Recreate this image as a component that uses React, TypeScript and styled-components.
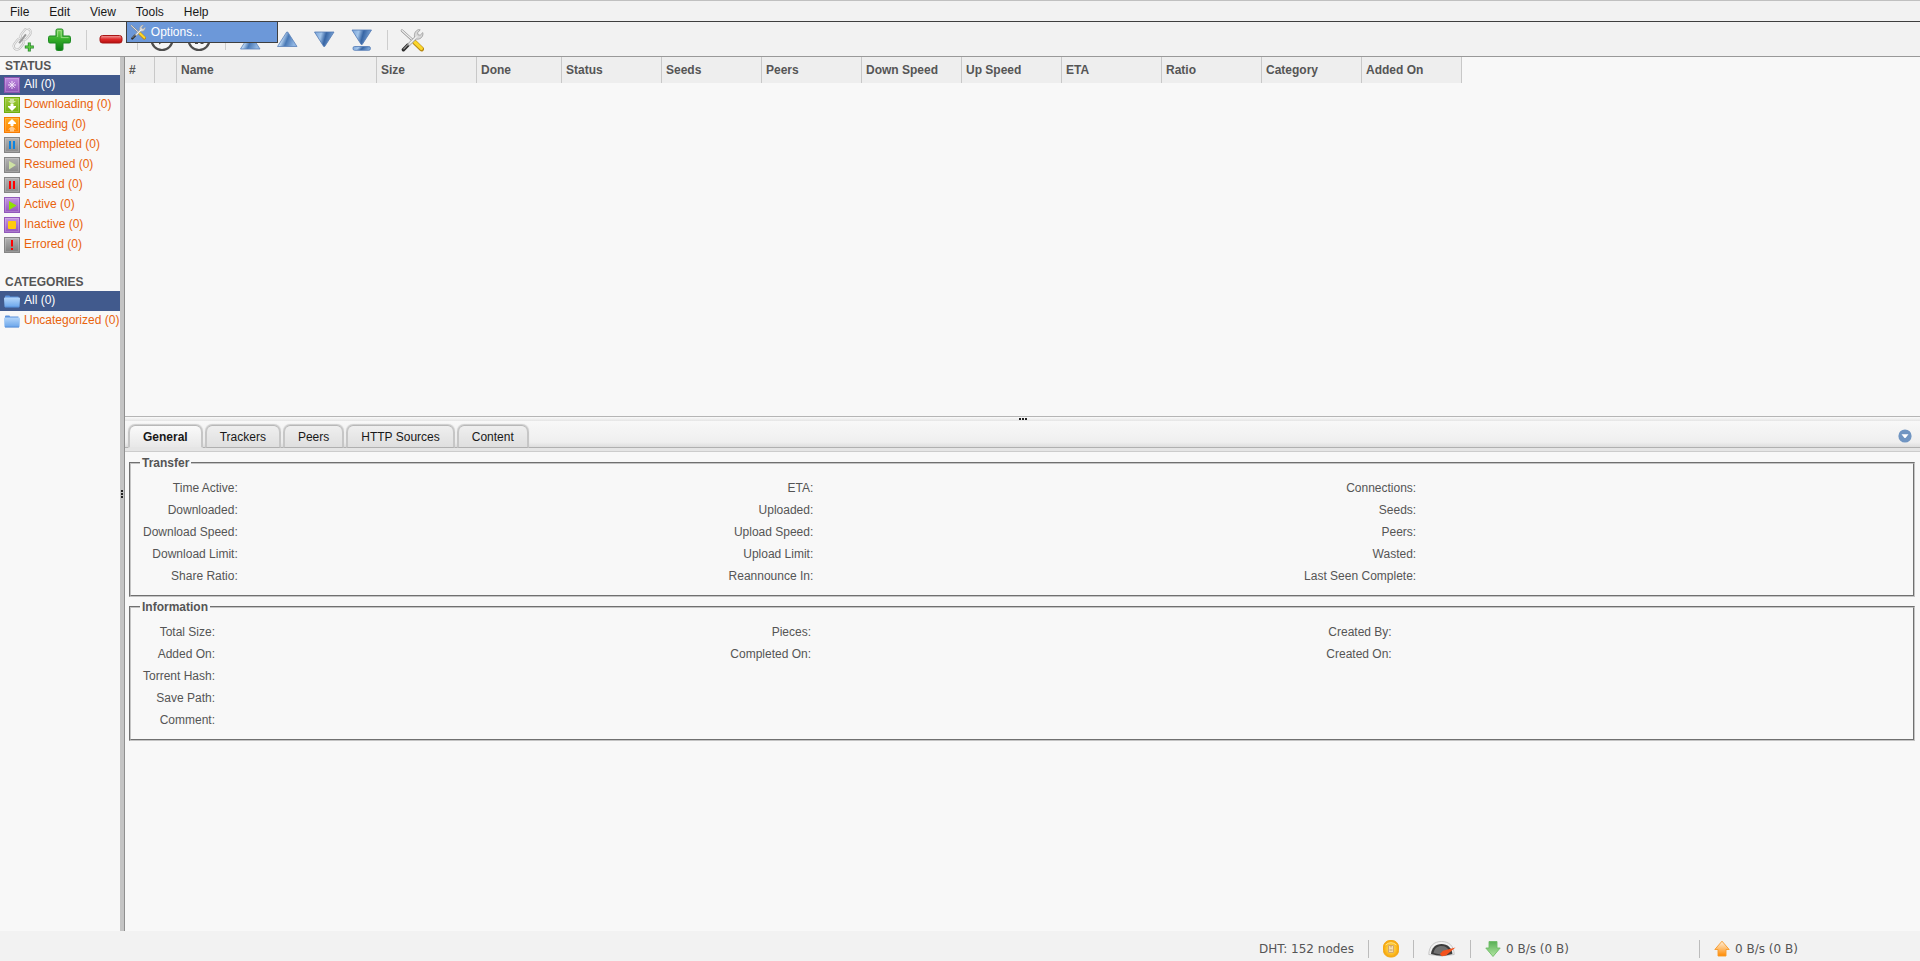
import React from "react";
import styled, { createGlobalStyle, css } from "styled-components";

const GlobalStyle = createGlobalStyle`
  *, *::before, *::after { box-sizing: border-box; }
  body {
    margin: 0;
    background: #f8f8f8;
    color: #555;
    font: 12px/16px "Liberation Sans", Arial, sans-serif;
  }
  button { font: inherit; color: inherit; border: 0; background: none; padding: 0; cursor: pointer; }
  ul { list-style: none; margin: 0; padding: 0; }
  svg { display: block; flex: none; }
`;

const Desktop = styled.div`
  display: flex;
  flex-direction: column;
  height: 100vh;
`;

/* Menu bar */

const MenuBar = styled.nav`
  background: #f2f2f2;
  border-top: 1px solid #c0c0c0;
  border-bottom: 1px solid #3f3f3f;
`;

const MenuList = styled.ul`
  display: flex;
`;

const MenuItem = styled.li`
  position: relative;
`;

const MenuButton = styled.button`
  display: block;
  height: 20px;
  padding: 2px 10px 0;
  line-height: 18px;
  color: #181818;
`;

const DropDown = styled.ul`
  position: absolute;
  top: 20px;
  left: 0;
  z-index: 2;
  width: 152px;
  border: 1px solid #3f3f3f;
  background: #6c98d9;
`;

const DropDownButton = styled.button`
  display: flex;
  align-items: center;
  gap: 5px;
  width: 100%;
  height: 20px;
  padding: 0 3px;
  color: #fff;
`;

/* Toolbar */

const Toolbar = styled.div`
  display: flex;
  align-items: center;
  height: 35px;
  padding: 2px 11px 0;
  background: #f2f2f2;
  border-bottom: 1px solid #999;
`;

const ToolButton = styled.button`
  width: 24px;
  height: 24px;
  & + & { margin-left: 13px; }
`;

const ToolDivider = styled.span`
  width: 1px;
  height: 20px;
  margin: 0 12px 0 14px;
  background: #cdcdcd;
`;

/* Body */

const Body = styled.div`
  display: flex;
  flex: 1;
  min-height: 0;
`;

const Sidebar = styled.aside`
  width: 120px;
  overflow: hidden;
`;

const FilterHeading = styled.h2`
  margin: 0;
  padding: 1px 5px;
  font-size: 12px;
  line-height: 16px;
  text-transform: uppercase;
  white-space: nowrap;
`;

const FilterList = styled.ul`
  margin-bottom: 18px;
`;

const FilterLink = styled.a<{ $selected?: boolean }>`
  display: flex;
  gap: 4px;
  height: 20px;
  padding: 2px 0 2px 4px;
  text-decoration: none;
  white-space: nowrap;
  color: #e8630c;
  ${(p) => p.$selected && css`
    color: #fff;
    background: #415a8d;
  `}
`;

const FilterText = styled.span`
  line-height: 14px;
`;

const ColumnHandle = styled.div`
  display: flex;
  flex-direction: column;
  align-items: center;
  justify-content: center;
  gap: 1px;
  width: 5px;
  background: #c4c4c4;
  border-right: 1px solid #8f8f8f;
`;

const Dot = styled.i`
  width: 2px;
  height: 2px;
  background: #222;
`;

const Main = styled.main`
  display: grid;
  grid-template-rows: 359fr auto 510fr;
  grid-template-columns: minmax(0, 1fr);
  flex: 1;
  min-width: 0;
`;

const TorrentPane = styled.section`
  overflow: hidden;
`;

const TorrentTable = styled.table`
  table-layout: fixed;
  width: 1337px;
  border-collapse: separate;
  border-spacing: 0;
  background: #eee;
`;

const HeaderCell = styled.th<{ $width: number }>`
  width: ${(p) => p.$width}px;
  height: 26px;
  padding: 0 4px;
  border-right: 1px solid #c8c8c8;
  text-align: left;
  white-space: nowrap;
`;

const RowHandle = styled.div`
  display: flex;
  align-items: center;
  justify-content: center;
  gap: 1px;
  height: 5px;
  border-top: 1px solid #b5b5b5;
  background: linear-gradient(#fafafa, #e5e5e5);
`;

/* Properties panel */

const PropertiesPane = styled.section`
  min-height: 0;
  overflow: hidden;
`;

const TabBar = styled.div`
  display: flex;
  align-items: flex-end;
  justify-content: space-between;
  height: 31px;
  padding: 0 8px 0 3px;
  background: linear-gradient(#f8f8f8, #efefef 21px, #dedede 26px, #b0b0b0 26px, #b0b0b0 27px, #e5e5e5 27px);
  border-bottom: 1px solid #ccc;
`;

const TabList = styled.div`
  display: flex;
  gap: 2px;
  margin-bottom: 3px;
`;

const Tab = styled.button<{ $active?: boolean }>`
  height: 23px;
  padding: 1px 13px 0;
  border-style: solid;
  border-width: 1px 2px;
  border-color: #b8b8b8 #c6c6c6 #b0b0b0;
  border-radius: 7px 7px 0 0;
  color: #181818;
  background: linear-gradient(#efefef, #dfdfdf);
  box-shadow: 0 -1px 1px #ccc;
  ${(p) => p.$active && css`
    font-weight: bold;
    background: linear-gradient(#fafafa, #e8e8e8);
    border-bottom-color: #e5e5e5;
  `}
`;

const CollapseButton = styled.button`
  margin-bottom: 8px;
`;

const PropertyGroup = styled.fieldset`
  min-width: 0;
  margin: 0 5px 3px 4px;
  padding: 7px 9px 8px;
  border: 2px groove #c4c4c4;
`;

const GroupTitle = styled.legend`
  padding: 0 2px;
  font-weight: bold;
  line-height: 14px;
`;

const Properties = styled.div`
  padding-top: 4px;
`;

const PropertyTable = styled.table`
  width: 100%;
  border-collapse: collapse;
`;

const Label = styled.th`
  height: 22px;
  padding: 0 0 0 3px;
  font-weight: normal;
  text-align: right;
  white-space: nowrap;
`;

const Value = styled.td`
  width: 33%;
  padding: 0;
`;

/* Status bar */

const StatusBar = styled.footer`
  display: flex;
  align-items: center;
  justify-content: flex-end;
  height: 30px;
  padding-top: 6px;
  background: #f2f2f2;
  font-family: Verdana, "DejaVu Sans", sans-serif;
`;

const StatusCell = styled.div<{ $wide?: boolean }>`
  display: flex;
  align-items: center;
  gap: 5px;
  height: 18px;
  padding: 0 14px;
  white-space: nowrap;
  ${(p) => p.$wide && css`width: 229px;`}
  & + & { border-left: 1px solid #bcbcbc; }
  &:last-child { width: 221px; }
`;

/* Drawings */

const ToolsIcon = ({ size }: { size: number }) => (
  <svg width={size} height={size} viewBox="0 0 24 24" aria-hidden="true">
    <path d="M2 2.600 13.400 13" stroke="#8c8c8c" strokeWidth="2.600" strokeLinecap="round" />
    <path d="M2 2.400 13 12.600" stroke="#eee" strokeWidth="1.300" strokeLinecap="round" />
    <path d="M14.600 14.200 21.600 21" stroke="#b98a14" strokeWidth="4.800" strokeLinecap="round" />
    <path d="M14.700 14 21.400 20.400" stroke="#fbd62c" strokeWidth="3.200" strokeLinecap="round" />
    <path d="M3.400 21.800 8 17" stroke="#2b2b2b" strokeWidth="3.400" strokeLinecap="round" />
    <path d="M3.800 20.800 7.600 16.800" stroke="#999" strokeWidth="1.200" strokeLinecap="round" />
    <path d="M7.600 16 14.600 9c-.8-3 .6-6.400 4-7.400l1.600.2-2.600 3 .4 2 2.200.4 2.600-2.600c.8 3.200-1.600 6.600-5.400 6.600l-1.200-.2-6.800 7z" fill="#d8d8d8" stroke="#999" strokeWidth=".8" />
    <path d="M10 15.400 17 8.400" stroke="#fff" strokeWidth="1" />
  </svg>
);

const LinkAddIcon = () => (
  <svg width="24" height="24" viewBox="0 0 24 24" fill="none" aria-hidden="true">
    <g transform="rotate(-52 11 11)">
      <rect x="-1" y="8" width="12" height="7" rx="3.500" stroke="#b5b5b5" strokeWidth="2.200" />
      <rect x="-1" y="8" width="12" height="7" rx="3.500" stroke="#ececec" strokeWidth="1.100" />
      <rect x="11" y="7.500" width="12" height="7" rx="3.500" stroke="#b5b5b5" strokeWidth="2.200" />
      <rect x="11" y="7.500" width="12" height="7" rx="3.500" stroke="#ececec" strokeWidth="1.100" />
      <path d="M6 11.300h11" stroke="#9a9a9a" strokeWidth="2" />
    </g>
    <path d="M18.300 14.500v9M13.800 19h9" stroke="#27862a" strokeWidth="3" />
    <path d="M18.300 15.300v7.400M14.600 19H22" stroke="#5ccb43" strokeWidth="1.400" />
  </svg>
);

const AddIcon = () => (
  <svg width="24" height="24" viewBox="0 0 24 24" aria-hidden="true">
    <defs>
      <linearGradient id="add" x2="0" y2="1"><stop stopColor="#7bd05b" /><stop offset=".45" stopColor="#38b12b" /><stop offset="1" stopColor="#0d7c16" /></linearGradient>
    </defs>
    <path d="M9.500 1h4q1.500 0 1.500 1.500V8h6q1.500 0 1.500 1.500v4q0 1.500-1.500 1.500h-6v6q0 1.500-1.500 1.500h-4Q8 22.500 8 21v-6H2Q.5 15 .5 13.500v-4Q.5 8 2 8h6V2.500Q8 1 9.500 1z" fill="url(#add)" stroke="#1d8a22" />
    <path d="M9.600 9V2.600h3.600V9.600h7.400" stroke="#b4ea9c" fill="none" opacity=".7" />
  </svg>
);

const RemoveIcon = () => (
  <svg width="24" height="24" viewBox="0 0 24 24" aria-hidden="true">
    <defs>
      <linearGradient id="remove" x2="0" y2="1"><stop stopColor="#f0a0a0" /><stop offset=".5" stopColor="#e02a2a" /><stop offset="1" stopColor="#b50d0d" /></linearGradient>
    </defs>
    <rect x="1" y="7.500" width="22" height="7.500" rx="2.500" fill="url(#remove)" stroke="#a81616" />
  </svg>
);

const CircleIcon = ({ kind }: { kind: "play" | "pause" }) => (
  <svg width="24" height="24" viewBox="0 0 24 24" aria-hidden="true">
    <circle cx="12" cy="11.500" r="10.500" fill="#f6f6f6" stroke="#4e4e4e" strokeWidth="2.200" />
    {kind === "play" ? <path d="M9 6v10.500l8-5.200z" fill="#4e4e4e" /> : <path d="M8 6.500h3v9.500H8zM13.500 6.500h3v9.500h-3z" fill="#4e4e4e" />}
  </svg>
);

const QueueIcon = ({ down, bar }: { down?: boolean; bar?: boolean }) => (
  <svg width="24" height="24" viewBox="0 0 24 24" aria-hidden="true">
    <defs>
      <linearGradient id="queue" x2="1" y2=".3"><stop stopColor="#a5c8ee" /><stop offset=".35" stopColor="#b9d5f2" /><stop offset=".6" stopColor="#4878b5" /><stop offset="1" stopColor="#8fb5e2" /></linearGradient>
      <linearGradient id="queue-down" x2="1" y2=".2"><stop stopColor="#78a3d8" /><stop offset=".35" stopColor="#a3c5ea" /><stop offset=".6" stopColor="#3765a4" /><stop offset="1" stopColor="#7ea8da" /></linearGradient>
    </defs>
    {down
      ? <path d={bar ? "M3 2h19.500L13.200 16.500h-1z" : "M2.500 4h19.500L12.700 18.500h-1z"} fill="url(#queue-down)" stroke="#5079b4" strokeWidth=".8" strokeLinejoin="round" />
      : <path d={bar ? "M2.500 21h19.500L12.700 6.500h-1z" : "M2.500 18.500h19.500L12.700 4h-1z"} fill="url(#queue)" stroke="#5b82ba" strokeWidth=".8" strokeLinejoin="round" />}
    {bar && <rect x="4" y={down ? 18.500 : 1} width="17.400" height="3.800" rx="1.600" fill="url(#queue-down)" stroke="#5079b4" strokeWidth=".8" />}
  </svg>
);

type FilterKind = "all" | "downloading" | "seeding" | "completed" | "resumed" | "paused" | "active" | "inactive" | "errored";

const tileColors: Record<FilterKind, [string, string, string]> = {
  all: ["#c08ae0", "#8b4fb4", "#8a52b0"],
  downloading: ["#a2cc3c", "#74b010", "#6fae0c"],
  seeding: ["#ffab1e", "#ff8200", "#f77c00"],
  completed: ["#b4b4b4", "#8a8a8a", "#858585"],
  resumed: ["#b4b4b4", "#8a8a8a", "#858585"],
  paused: ["#b4b4b4", "#8a8a8a", "#858585"],
  active: ["#c597e2", "#9354bd", "#9158ba"],
  inactive: ["#c597e2", "#9354bd", "#9158ba"],
  errored: ["#b4b4b4", "#7d7d7d", "#858585"],
};

const tileMarks: Record<FilterKind, React.ReactNode> = {
  all: <path d="M8 4v8M4 8h8M5.300 5.300l5.400 5.400M10.700 5.300l-5.400 5.400" stroke="#efe0f8" strokeWidth="1" />,
  downloading: <><path d="M6 2h4v2h2L8 7.500 4 4h2z" fill="#cfe6a0" /><path d="M6.500 7h3v2H12v1l-4 4-4-4V9h2.500z" fill="#fff" /></>,
  seeding: <><path d="M6 14.500h4v-2h2L8 9l-4 3.500h2z" fill="#ffc98c" /><path d="M6.500 9h3V7H12V6L8 2 4 6v1h2.500z" fill="#fff" /></>,
  completed: <path d="M5 4h2v8H5zM9 4h2v8H9z" fill="#0b84e0" />,
  resumed: <path d="M5 4v8.500L12 8z" fill="#cfe3a4" />,
  paused: <path d="M5 4h2v8H5zM9 4h2v8H9z" fill="#f00" />,
  active: <path d="M5 4v9l7.500-4.500z" fill="#8fe000" />,
  inactive: <rect x="4" y="4" width="8" height="8" rx="1" fill="#ffcb0c" />,
  errored: <path d="M7 3h2v6.500H7zM7 11h2v2H7z" fill="#f00" />,
};

const FilterIcon = ({ kind }: { kind: FilterKind }) => {
  const [top, bottom, edge] = tileColors[kind];
  return (
    <svg width="16" height="16" viewBox="0 0 16 16" aria-hidden="true">
      <defs>
        <linearGradient id={`tile-${kind}`} x2="0" y2="1"><stop stopColor={top} /><stop offset="1" stopColor={bottom} /></linearGradient>
      </defs>
      <rect x=".5" y=".5" width="15" height="15" fill={`url(#tile-${kind})`} stroke={edge} />
      <rect x="1.500" y="1.500" width="13" height="13" fill="none" stroke="#fff" opacity=".2" />
      {tileMarks[kind]}
    </svg>
  );
};

const FolderIcon = () => (
  <svg width="16" height="16" viewBox="0 0 16 16" aria-hidden="true">
    <defs>
      <linearGradient id="folder" x2="0" y2="1"><stop stopColor="#b4d6fa" /><stop offset="1" stopColor="#68a4ea" /></linearGradient>
    </defs>
    <path d="M1 5V3.500q0-1 1-1h3q1 0 1 1h8.500V5H1z" fill="#5b92dc" />
    <path d="M0 5.500q0-.9 1-.9h14q1 0 1 .9l-.5 8q0 .8-1 .8H1.500q-1 0-1-.8z" fill="url(#folder)" />
    <path d="M1 14.100h14" stroke="#4f87d0" strokeWidth=".8" />
  </svg>
);

const CollapseIcon = () => (
  <svg width="14" height="14" viewBox="0 0 14 14" aria-hidden="true">
    <circle cx="7" cy="7" r="6.600" fill="#7095c2" />
    <path d="M3.500 5.200h7L7.500 9h-1z" fill="#fff" />
  </svg>
);

const ConnectedIcon = () => (
  <svg width="16" height="18" viewBox="0 0 16 18" aria-hidden="true">
    <defs>
      <radialGradient id="plug"><stop stopColor="#ffe07c" /><stop offset=".6" stopColor="#fdc52d" /><stop offset="1" stopColor="#f6a510" /></radialGradient>
    </defs>
    <rect x=".5" y=".5" width="15" height="16.500" rx="6.500" fill="url(#plug)" stroke="#f3a913" />
    <path d="M2.500 5Q8 .5 13.500 5" stroke="#ffe68c" fill="none" />
    <path d="M5.500 5.500h5v7h-5z" fill="#f6deb0" stroke="#d5a868" />
    <path d="M8 5.500v2M6.500 10h3" stroke="#c29a5c" />
  </svg>
);

const SpeedIcon = () => (
  <svg width="28" height="18" viewBox="0 0 28 18" aria-hidden="true">
    <path d="M.8 14.500C1 6 6 1.500 13.500 1.500S26 6 26.200 14.500q-12.600 3-25.400 0z" fill="#f1f1f1" stroke="#bbb" strokeWidth=".8" />
    <path d="M3 14C3.500 8 7.500 4 13.500 4S24 8 24.400 14q-11 3.500-21.400 0z" fill="#3c3c3c" />
    <path d="M5.500 13c.6-4.500 4-7 8-7s6 2 7 4l-6 5z" fill="#707070" />
    <path d="m27.500 7.500-12.600 3.300-3 3.200 2 2.200 4-.8z" fill="#f4511c" />
  </svg>
);

const TransferIcon = ({ up }: { up?: boolean }) => (
  <svg width="16" height="18" viewBox="0 0 16 18" aria-hidden="true">
    <defs>
      <linearGradient id="rate-down" x2="0" y2="1"><stop stopColor="#58b055" /><stop offset="1" stopColor="#b2e6a2" /></linearGradient>
      <linearGradient id="rate-up" x2="0" y2="1"><stop stopColor="#fff0dc" /><stop offset="1" stopColor="#ff8a00" /></linearGradient>
    </defs>
    {up
      ? <path d="m8 1.200 7.200 8.300h-3.200v6.500H4V9.500H.8z" fill="url(#rate-up)" stroke="#f79a28" strokeWidth=".9" />
      : <path d="M4 1.500h8V8h3.200L8 16.500.8 8H4z" fill="url(#rate-down)" stroke="#6fbc68" strokeWidth=".9" />}
  </svg>
);

/* Data */

const columns: [string, number][] = [
  ["#", 30], ["", 22], ["Name", 200], ["Size", 100], ["Done", 85], ["Status", 100], ["Seeds", 100],
  ["Peers", 100], ["Down Speed", 100], ["Up Speed", 100], ["ETA", 100], ["Ratio", 100], ["Category", 100], ["Added On", 100],
];

const statusFilters: [FilterKind, string][] = [
  ["all", "All"], ["downloading", "Downloading"], ["seeding", "Seeding"], ["completed", "Completed"], ["resumed", "Resumed"],
  ["paused", "Paused"], ["active", "Active"], ["inactive", "Inactive"], ["errored", "Errored"],
];

const transferRows = [
  ["Time Active:", "ETA:", "Connections:"],
  ["Downloaded:", "Uploaded:", "Seeds:"],
  ["Download Speed:", "Upload Speed:", "Peers:"],
  ["Download Limit:", "Upload Limit:", "Wasted:"],
  ["Share Ratio:", "Reannounce In:", "Last Seen Complete:"],
];

const informationRows = [
  ["Total Size:", "Pieces:", "Created By:"],
  ["Added On:", "Completed On:", "Created On:"],
  ["Torrent Hash:"],
  ["Save Path:"],
  ["Comment:"],
];

const Group = ({ title, rows }: { title: string; rows: string[][] }) => (
  <PropertyGroup>
    <GroupTitle>{title}</GroupTitle>
    <PropertyTable>
      <tbody>
        {rows.map((labels) => (
          <tr key={labels[0]}>
            {labels.map((label) => (
              <React.Fragment key={label}>
                <Label scope="row">{label}</Label>
                <Value colSpan={labels.length === 1 ? 5 : 1} />
              </React.Fragment>
            ))}
          </tr>
        ))}
      </tbody>
    </PropertyTable>
  </PropertyGroup>
);

export default function App() {
  return (
    <Desktop>
      <GlobalStyle />
      <MenuBar>
        <MenuList>
          {["File", "Edit", "View", "Tools", "Help"].map((name) => (
            <MenuItem key={name}>
              <MenuButton>{name}</MenuButton>
              {name === "Tools" && (
                <DropDown>
                  <li><DropDownButton><ToolsIcon size={16} />Options...</DropDownButton></li>
                </DropDown>
              )}
            </MenuItem>
          ))}
        </MenuList>
      </MenuBar>

      <Toolbar>
        <ToolButton aria-label="Add torrent link"><LinkAddIcon /></ToolButton>
        <ToolButton aria-label="Add torrent file"><AddIcon /></ToolButton>
        <ToolDivider />
        <ToolButton aria-label="Delete"><RemoveIcon /></ToolButton>
        <ToolDivider />
        <ToolButton aria-label="Resume"><CircleIcon kind="play" /></ToolButton>
        <ToolButton aria-label="Pause"><CircleIcon kind="pause" /></ToolButton>
        <ToolDivider />
        <ToolButton aria-label="Top of queue"><QueueIcon bar /></ToolButton>
        <ToolButton aria-label="Move up queue"><QueueIcon /></ToolButton>
        <ToolButton aria-label="Move down queue"><QueueIcon down /></ToolButton>
        <ToolButton aria-label="Bottom of queue"><QueueIcon down bar /></ToolButton>
        <ToolDivider />
        <ToolButton aria-label="Options"><ToolsIcon size={24} /></ToolButton>
      </Toolbar>

      <Body>
        <Sidebar>
          <FilterHeading>Status</FilterHeading>
          <FilterList>
            {statusFilters.map(([kind, name]) => (
              <li key={kind}>
                <FilterLink href="#" $selected={kind === "all"}>
                  <FilterIcon kind={kind} />
                  <FilterText>{name} (0)</FilterText>
                </FilterLink>
              </li>
            ))}
          </FilterList>
          <FilterHeading>Categories</FilterHeading>
          <FilterList>
            {["All", "Uncategorized"].map((name) => (
              <li key={name}>
                <FilterLink href="#" $selected={name === "All"}>
                  <FolderIcon />
                  <FilterText>{name} (0)</FilterText>
                </FilterLink>
              </li>
            ))}
          </FilterList>
        </Sidebar>
        <ColumnHandle><Dot /><Dot /><Dot /></ColumnHandle>

        <Main>
          <TorrentPane>
            <TorrentTable>
              <thead>
                <tr>
                  {columns.map(([name, width]) => <HeaderCell key={name} $width={width}>{name}</HeaderCell>)}
                </tr>
              </thead>
            </TorrentTable>
          </TorrentPane>
          <RowHandle><Dot /><Dot /><Dot /></RowHandle>
          <PropertiesPane>
            <TabBar>
              <TabList role="tablist">
                {["General", "Trackers", "Peers", "HTTP Sources", "Content"].map((name) => (
                  <Tab key={name} role="tab" aria-selected={name === "General"} $active={name === "General"}>{name}</Tab>
                ))}
              </TabList>
              <CollapseButton aria-label="Collapse panel"><CollapseIcon /></CollapseButton>
            </TabBar>
            <Properties>
              <Group title="Transfer" rows={transferRows} />
              <Group title="Information" rows={informationRows} />
            </Properties>
          </PropertiesPane>
        </Main>
      </Body>

      <StatusBar>
        <StatusCell>DHT: 152 nodes</StatusCell>
        <StatusCell><ConnectedIcon /></StatusCell>
        <StatusCell><SpeedIcon /></StatusCell>
        <StatusCell $wide><TransferIcon />0 B/s (0 B)</StatusCell>
        <StatusCell><TransferIcon up />0 B/s (0 B)</StatusCell>
      </StatusBar>
    </Desktop>
  );
}
